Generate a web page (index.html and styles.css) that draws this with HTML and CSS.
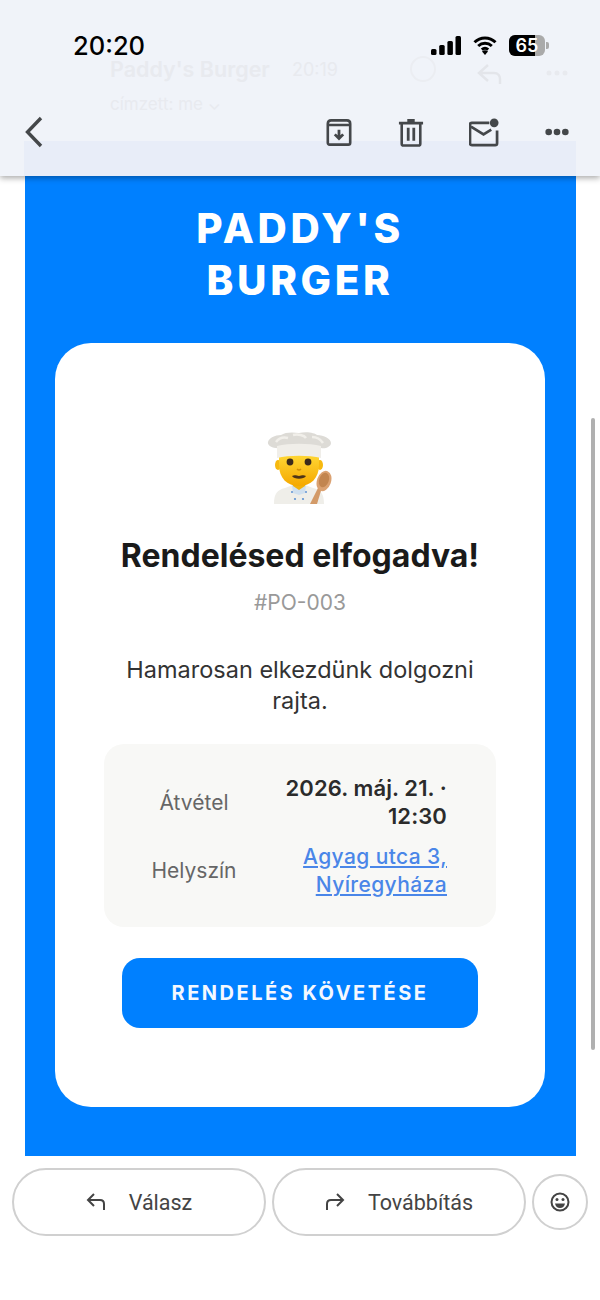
FILE: index.html
```html
<!DOCTYPE html>
<html lang="hu">
<head>
    <meta charset="UTF-8">
    <meta name="viewport" content="width=device-width, initial-scale=1.0">
    <title>Paddy's Burger</title>
    <link rel="stylesheet" href="styles.css">
</head>
<body>
    <header class="top-bar">
        <div class="ghost-tint"></div>
        <div class="ghost-row">
            <span class="ghost-name">Paddy's Burger</span>
            <span class="ghost-time">20:19</span>
            <svg class="ghost-smile" width="26" height="26" viewBox="0 0 26 26"><circle cx="13" cy="13" r="12" fill="none" stroke="#ebedf2" stroke-width="2"/></svg>
            <svg class="ghost-reply" width="26" height="24" viewBox="0 0 26 24"><path d="M11 3 2 11l9 8M2 11h15c4 0 6 3 6 6v5" fill="none" stroke="#e3e5ea" stroke-width="2.5"/></svg>
            <svg class="ghost-dots" width="22" height="6" viewBox="0 0 22 6" fill="#e8eaef"><circle cx="3" cy="3" r="2.500"/><circle cx="11" cy="3" r="2.500"/><circle cx="19" cy="3" r="2.500"/></svg>
        </div>
        <div class="ghost-to">címzett: me ⌄</div>

        <div class="status-bar">
            <span class="clock">20:20</span>
            <div class="status-icons">
                <svg width="30" height="19" viewBox="0 0 30 19"><rect x="0" y="13" width="5.500" height="6" rx="1.500"/><rect x="8.200" y="9" width="5.500" height="10" rx="1.500"/><rect x="16.400" y="5" width="5.500" height="14" rx="1.500"/><rect x="24.500" y="0" width="5.500" height="19" rx="1.500"/></svg>
                <svg width="26" height="20" viewBox="0 0 24 20"><path d="M1.500 7.200a15 15 0 0 1 21 0M5.200 11a10 10 0 0 1 13.600 0M8.800 14.600a5 5 0 0 1 6.400 0" fill="none" stroke="#000" stroke-width="3"/><path d="M12 20l-3-3.400a4.400 4.400 0 0 1 6 0z"/></svg>
                <div class="battery-wrap">
                    <div class="battery"><span class="battery-fill"></span><span class="battery-num">65</span></div>
                    <span class="battery-nub"></span>
                </div>
            </div>
        </div>

        <nav class="toolbar">
            <svg width="20" height="32" viewBox="0 0 20 32"><path d="M16 2 2.500 16 16 30" fill="none" stroke="#44474a" stroke-width="3.400"/></svg>
            <div class="toolbar-actions">
                <svg width="28" height="29" viewBox="0 0 30 30"><path d="M3 8V5.500Q3 2 6.500 2h17Q27 2 27 5.500V8M3 7h24v19q0 2-2 2H5q-2 0-2-2z" fill="none" stroke="#44474a" stroke-width="2.800"/><path d="M15 12v9M10.500 17l4.500 4.500 4.500-4.500" fill="none" stroke="#44474a" stroke-width="3"/></svg>
                <svg width="26" height="29" viewBox="0 0 28 30"><path d="M1 5h26M10 2h8" stroke="#44474a" stroke-width="3" fill="none"/><path d="M4 5v22q0 2 2 2h16q2 0 2-2V5" fill="none" stroke="#44474a" stroke-width="2.800"/><path d="M11 10v14M17 10v14" stroke="#44474a" stroke-width="3"/></svg>
                <svg width="31" height="29" viewBox="0 0 32 30"><path d="M21 5H3q-2 0-2 2v19q0 2 2 2h24q2 0 2-2V13" fill="none" stroke="#44474a" stroke-width="2.800"/><path d="M2 9l13 8 8-5" fill="none" stroke="#44474a" stroke-width="2.800"/><circle cx="26" cy="5" r="4.500" fill="#44474a"/></svg>
                <svg width="24" height="8" viewBox="0 0 26 8" fill="#44474a"><circle cx="4" cy="4" r="3.600"/><circle cx="13" cy="4" r="3.600"/><circle cx="22" cy="4" r="3.600"/></svg>
            </div>
        </nav>
    </header>

    <main class="email">
        <h1 class="brand">PADDY'S<br>BURGER</h1>
        <section class="card">
            <!-- cook emoji -->
            <svg class="chef" width="66" height="72" viewBox="0 0 66 72">
                <defs>
                    <linearGradient id="skin" x1="0" y1="0" x2="0" y2="1">
                        <stop offset="0" stop-color="#ffd836"/>
                        <stop offset="1" stop-color="#f5a800"/>
                    </linearGradient>
                </defs>
                <path d="M7 72c0-10 3-14 11-16l8-3h12l8 3c8 2 11 6 11 16z" fill="#efeee9"/>
                <path d="M25 53h14l-1 8-6 2-6-2z" fill="#cfdfee"/>
                <g fill="#5f93d4">
                    <circle cx="25" cy="60" r="1"/><circle cx="39" cy="60" r="1"/>
                    <circle cx="28" cy="67" r="1.100"/><circle cx="36" cy="67" r="1.100"/>
                </g>
                <path d="M26 46h12v8l-6 4-6-4z" fill="#f2b10a"/>
                <ellipse cx="11" cy="33" rx="3" ry="5" fill="#f7b90f"/>
                <ellipse cx="53" cy="33" rx="3" ry="5" fill="#f7b90f"/>
                <path d="M12 22h40v11c0 13-8 21-20 21s-20-8-20-21z" fill="url(#skin)"/>
                <circle cx="23" cy="30" r="3.400" fill="#3b2a1c"/>
                <circle cx="41" cy="30" r="3.400" fill="#3b2a1c"/>
                <path d="M30 37q2 2 4 0" fill="none" stroke="#cf8f08" stroke-width="1.500"/>
                <path d="M25 44c3-1.500 5 0 7 0s4-1.500 7 0c-2 3.500-12 3.500-14 0z" fill="#4d3418"/>
                <path d="M14 16C6 17 0 14 1 10 2 6 8 3 14 3c4-3 12-3 18-2 8-2 16 0 18 2 7 0 14 4 14 8 0 4-6 6-10 5z" fill="#dddbd6"/>
                <path d="M9 10c3-4 8-5 12-4M26 3c5-1 11 0 13 3M45 5c5 0 9 3 11 6" fill="none" stroke="#f1efea" stroke-width="2.500"/>
                <path d="M10 14c12-3 32-3 44 0v12c-12-3-32-3-44 0z" fill="#f0eee9"/>
                <path d="M43 72l9-18 3 1.500-5 16.500z" fill="#d39a68"/>
                <ellipse cx="57" cy="49" rx="7" ry="10.500" transform="rotate(20 57 49)" fill="#dba272"/>
                <ellipse cx="57" cy="48" rx="4.800" ry="7.500" transform="rotate(20 57 48)" fill="#c2854f"/>
            </svg>
            <h2 class="card-title">Rendelésed elfogadva!</h2>
            <p class="order-no">#PO-003</p>
            <p class="message">Hamarosan elkezdünk dolgozni rajta.</p>

            <div class="details">
                <div class="detail-label">Átvétel</div>
                <div class="detail-value">2026. máj. 21. · 12:30</div>
                <div class="detail-label">Helyszín</div>
                <div class="detail-value"><a href="#">Agyag utca 3, Nyíregyháza</a></div>
            </div>

            <a class="track-btn" href="#">RENDELÉS KÖVETÉSE</a>
        </section>
    </main>

    <footer class="reply-bar">
        <button class="pill">
            <svg width="20" height="18" viewBox="0 0 20 18"><path d="M8 1 2 7l6 6M2 7h12q4 0 4 4v6" fill="none" stroke="#444" stroke-width="2"/></svg>
            Válasz
        </button>
        <button class="pill">
            <svg width="20" height="18" viewBox="0 0 20 18"><path d="M12 1l6 6-6 6M18 7H6q-4 0-4 4v6" fill="none" stroke="#444" stroke-width="2"/></svg>
            Továbbítás
        </button>
        <button class="round">
            <svg width="20" height="20" viewBox="0 0 20 20"><circle cx="10" cy="10" r="8.500" fill="none" stroke="#444" stroke-width="2"/><circle cx="7" cy="7.500" r="1.500" fill="#444"/><circle cx="13" cy="7.500" r="1.500" fill="#444"/><path d="M5 11.500h10q-1 4.500-5 4.500t-5-4.500z" fill="#444"/></svg>
        </button>
    </footer>

    <div class="scroll-thumb"></div>
</body>
</html>
```

FILE: styles.css
```css
* {
    box-sizing: border-box;
}
body {
    margin: 0;
    width: 600px;
    height: 1300px;
    overflow: hidden;
    position: relative;
    background: #fff;
    font-family: Inter, "Liberation Sans", sans-serif;
}
.top-bar {
    position: relative;
    height: 176px;
    background: #f0f3f9;
    box-shadow: 0 2px 6px rgba(0, 0, 0, 0.35);
    z-index: 2;
}
.ghost-tint {
    position: absolute;
    top: 141px;
    left: 24px;
    width: 552px;
    height: 35px;
    background: #e8edf8;
}
.ghost-row {
    position: absolute;
    top: 56px;
    left: 110px;
    width: 460px;
    display: flex;
    align-items: center;
    color: #e8eaef;
    font-size: 21.500px;
    font-weight: 600;
}
.ghost-time {
    margin-left: 22px;
    font-size: 18px;
    font-weight: 400;
}
.ghost-smile {
    position: absolute;
    left: 300px;
    top: 0;
}
.ghost-reply {
    position: absolute;
    left: 367px;
    top: 6px;
}
.ghost-dots {
    position: absolute;
    left: 436px;
    top: 14px;
}
.ghost-to {
    position: absolute;
    top: 94px;
    left: 110px;
    color: #e8eaef;
    font-size: 17px;
}
.status-bar {
    position: relative;
    height: 60px;
    padding: 30px 51px 0 73px;
    display: flex;
    justify-content: space-between;
    align-items: center;
}
.clock {
    font-size: 25.500px;
    font-weight: 500;
    color: #000;
}
.status-icons {
    display: flex;
    align-items: center;
    gap: 11px;
}
.battery-wrap {
    display: flex;
    align-items: center;
    gap: 1px;
}
.battery {
    position: relative;
    width: 36px;
    height: 21px;
    border-radius: 6px;
    background: #aaa;
    overflow: hidden;
    text-align: center;
    color: #fff;
    font-size: 18px;
    font-weight: 600;
    line-height: 21px;
}
.battery-fill {
    position: absolute;
    top: 0;
    left: 0;
    width: 26px;
    height: 21px;
    background: #000;
}
.battery-num {
    position: relative;
}
.battery-nub {
    width: 3px;
    height: 7px;
    border-radius: 0 2px 2px 0;
    background: #aaa;
}
.toolbar {
    position: relative;
    height: 64px;
    margin-top: 40px;
    padding: 0 31px 0 25px;
    display: flex;
    justify-content: space-between;
    align-items: center;
}
.toolbar-actions {
    display: flex;
    align-items: center;
    gap: 45px;
}
.email {
    width: 551px;
    height: 980px;
    margin-left: 25px;
    padding: 27px 31px 0 30px;
    background: #0080ff;
}
.brand {
    margin: 0 0 36px;
    text-align: center;
    color: #fff;
    font-size: 40.500px;
    line-height: 52px;
    font-weight: 800;
    letter-spacing: 3.600px;
}
.card {
    height: 764px;
    padding: 89px 49px 0;
    background: #fff;
    border-radius: 36px;
    display: flex;
    flex-direction: column;
    align-items: center;
}
.chef {
    display: block;
}
.card-title {
    margin: 32px 0 0;
    font-size: 32px;
    line-height: 40px;
    font-weight: 700;
    color: #1a1a1a;
    white-space: nowrap;
}
.order-no {
    margin: 13px 0 0;
    font-size: 21px;
    line-height: 28px;
    color: #999;
}
.message {
    margin: 37px 0 0;
    width: 370px;
    text-align: center;
    font-size: 23.500px;
    line-height: 31px;
    color: #333;
}
.details {
    width: 100%;
    height: 183px;
    margin-top: 28px;
    padding: 30px 49px 0 20px;
    background: #f8f8f6;
    border-radius: 20px;
    display: grid;
    grid-template-columns: 140px 1fr;
    row-gap: 12px;
    align-content: start;
    align-items: center;
}
.detail-label {
    text-align: center;
    font-size: 21px;
    color: #666;
}
.detail-value {
    text-align: right;
    font-size: 22px;
    line-height: 28px;
    font-weight: 600;
    letter-spacing: 0.100px;
    color: #2b2b2b;
}
.detail-value a {
    color: #4a86e8;
    font-size: 21px;
    font-weight: 500;
    line-height: 27px;
    letter-spacing: 0.400px;
}
.track-btn {
    width: 356px;
    height: 70px;
    margin-top: 31px;
    background: #0080ff;
    border-radius: 18px;
    display: flex;
    justify-content: center;
    align-items: center;
    color: #f4f8ff;
    font-size: 20px;
    font-weight: 700;
    letter-spacing: 2.500px;
    text-decoration: none;
}
.reply-bar {
    padding: 12px 12px 0;
    display: flex;
    align-items: center;
    gap: 6px;
}
.pill {
    width: 254px;
    height: 68px;
    border: 2px solid #d0d0d0;
    border-radius: 34px;
    background: #fff;
    display: flex;
    justify-content: center;
    align-items: center;
    gap: 23px;
    font-family: Roboto, sans-serif;
    font-size: 21.500px;
    color: #444;
}
.round {
    width: 56px;
    height: 56px;
    padding: 0;
    border: 2px solid #d0d0d0;
    border-radius: 50%;
    background: #fff;
    display: flex;
    justify-content: center;
    align-items: center;
}
.scroll-thumb {
    position: absolute;
    top: 418px;
    left: 591px;
    width: 4px;
    height: 632px;
    border-radius: 2px;
    background: #b0b0b0;
}
```
